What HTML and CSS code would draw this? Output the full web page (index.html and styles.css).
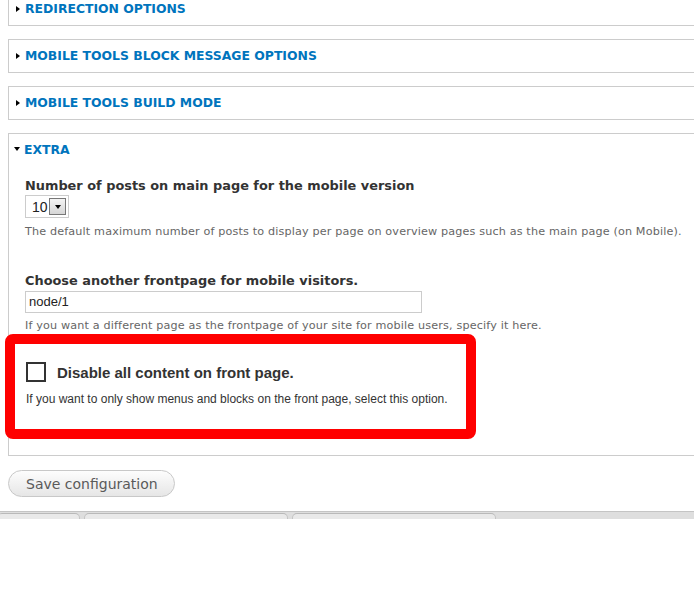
FILE: index.html
```html
<!DOCTYPE html>
<html>
<head>
<meta charset="utf-8">
<link rel="stylesheet" href="styles.css">
</head>
<body>
<div class="page">
  <div class="fieldset first">
    <div class="legend"><span class="arrow-right"></span><span class="legend-text">REDIRECTION OPTIONS</span></div>
  </div>
  <div class="fieldset">
    <div class="legend"><span class="arrow-right"></span><span class="legend-text">MOBILE TOOLS BLOCK MESSAGE OPTIONS</span></div>
  </div>
  <div class="fieldset">
    <div class="legend"><span class="arrow-right"></span><span class="legend-text">MOBILE TOOLS BUILD MODE</span></div>
  </div>
  <div class="fieldset expanded">
    <div class="legend"><span class="arrow-down"></span><span class="legend-text">EXTRA</span></div>
    <div class="content">
      <div class="label">Number of posts on main page for the mobile version</div>
      <div class="select"><span class="select-value">10</span><span class="select-btn"><span class="select-caret"></span></span></div>
      <div class="desc">The default maximum number of posts to display per page on overview pages such as the main page (on Mobile).</div>

      <div class="label second-label">Choose another frontpage for mobile visitors.</div>
      <div class="textfield">node/1</div>
      <div class="desc desc-tight">If you want a different page as the frontpage of your site for mobile users, specify it here.</div>

      <div class="highlight">
        <div class="check-row">
          <span class="checkbox"></span>
          <span class="check-label">Disable all content on front page.</span>
        </div>
        <div class="check-desc">If you want to only show menus and blocks on the front page, select this option.</div>
      </div>
    </div>
  </div>
  <div class="actions">
    <span class="button">Save configuration</span>
  </div>
</div>
<div class="tabbar">
  <span class="tab tab1"></span>
  <span class="tab tab2"></span>
  <span class="tab tab3"></span>
</div>
</body>
</html>
```

FILE: styles.css
```css
html, body {
  margin: 0;
  padding: 0;
  background: #fff;
  overflow: hidden;
}
body {
  width: 694px;
  height: 600px;
  font-family: "DejaVu Sans", Verdana, sans-serif;
}
.page {
  padding-left: 8px;
  width: 760px;
}
.fieldset {
  border: 1px solid #ccc;
  border-right: none;
  margin-bottom: 13px;
}
.fieldset.first {
  margin-top: -8px;
}
.legend {
  height: 31px;
  padding-bottom: 1px;
  display: flex;
  align-items: center;
  padding-left: 5px;
}
.legend-text {
  color: #0074bd;
  font-weight: bold;
  font-size: 12.4px;
}
.arrow-right {
  width: 0;
  height: 0;
  border-top: 3.5px solid transparent;
  border-bottom: 3.5px solid transparent;
  border-left: 4px solid #000;
  margin-left: 2px;
  margin-right: 5px;
}
.arrow-down {
  width: 0;
  height: 0;
  border-left: 3.5px solid transparent;
  border-right: 3.5px solid transparent;
  border-top: 4px solid #000;
  margin-right: 4px;
  margin-top: -1px;
}
.content {
  padding: 11px 0 16px 16px;
}
.label {
  color: #333;
  font-weight: bold;
  font-size: 12.9px;
  line-height: 18px;
}
.second-label {
  margin-top: 32px;
}
.select {
  width: 42px;
  height: 21px;
  border: 1px solid #ccc;
  display: flex;
  align-items: center;
  justify-content: space-between;
  box-sizing: content-box;
}
.select-value {
  font-family: "Liberation Sans", Arial, sans-serif;
  font-size: 14px;
  color: #222;
  padding-left: 6px;
}
.select-btn {
  width: 15px;
  height: 15px;
  margin-right: 2px;
  border: 1px solid #777;
  background: linear-gradient(#f4f4f4, #d6d6d6);
  display: flex;
  align-items: center;
  justify-content: center;
}
.select-caret {
  width: 0;
  height: 0;
  border-left: 3.5px solid transparent;
  border-right: 3.5px solid transparent;
  border-top: 4px solid #000;
}
.desc {
  color: #666;
  font-size: 11.2px;
  line-height: 16px;
  margin-top: 6px;
  letter-spacing: 0.15px;
  white-space: nowrap;
}
.desc-tight {
  margin-top: 5px;
}
.textfield {
  margin-top: 1px;
  width: 386px;
  height: 20px;
  border: 1px solid #ccc;
  font-family: "Liberation Sans", Arial, sans-serif;
  font-size: 13px;
  color: #222;
  line-height: 20px;
  padding-left: 3px;
  padding-right: 6px;
}
.highlight {
  margin-left: -20px;
  width: 440px;
  border: 10px solid #ff0000;
  border-radius: 8px;
  padding: 18px 0 0 11px;
  height: 67px;
  box-sizing: content-box;
  font-family: "Liberation Sans", Arial, sans-serif;
}
.check-row {
  display: flex;
  align-items: center;
  gap: 11px;
}
.checkbox {
  width: 16px;
  height: 16px;
  border: 2px solid #333;
  background: #fff;
  flex: none;
}
.check-label {
  font-weight: bold;
  font-size: 15px;
  color: #333;
}
.check-desc {
  margin-top: 9px;
  font-size: 12px;
  line-height: 16px;
  color: #333;
}
.actions {
  padding-top: 1px;
  padding-bottom: 14px;
}
.button {
  display: inline-flex;
  align-items: center;
  box-sizing: border-box;
  width: 167px;
  height: 27px;
  border: 1px solid #c8c8c8;
  border-radius: 14px;
  background: linear-gradient(#fdfdfd, #e6e6e6);
  color: #5a5a5a;
  font-size: 14px;
  padding-left: 17px;
}
.tabbar {
  height: 7px;
  border-top: 1px solid #c4c4c4;
  background: #dedede;
  display: flex;
  align-items: flex-end;
  gap: 4px;
}
.tab {
  height: 5px;
  background: #e9e9e9;
  border-top: 1px solid #b9b9b9;
  border-left: 1px solid #c4c4c4;
  border-right: 1px solid #c4c4c4;
  border-radius: 5px 5px 0 0;
}
.tab1 {
  width: 81px;
  margin-left: -3px;
}
.tab2 {
  width: 202px;
}
.tab3 {
  width: 202px;
}
```
